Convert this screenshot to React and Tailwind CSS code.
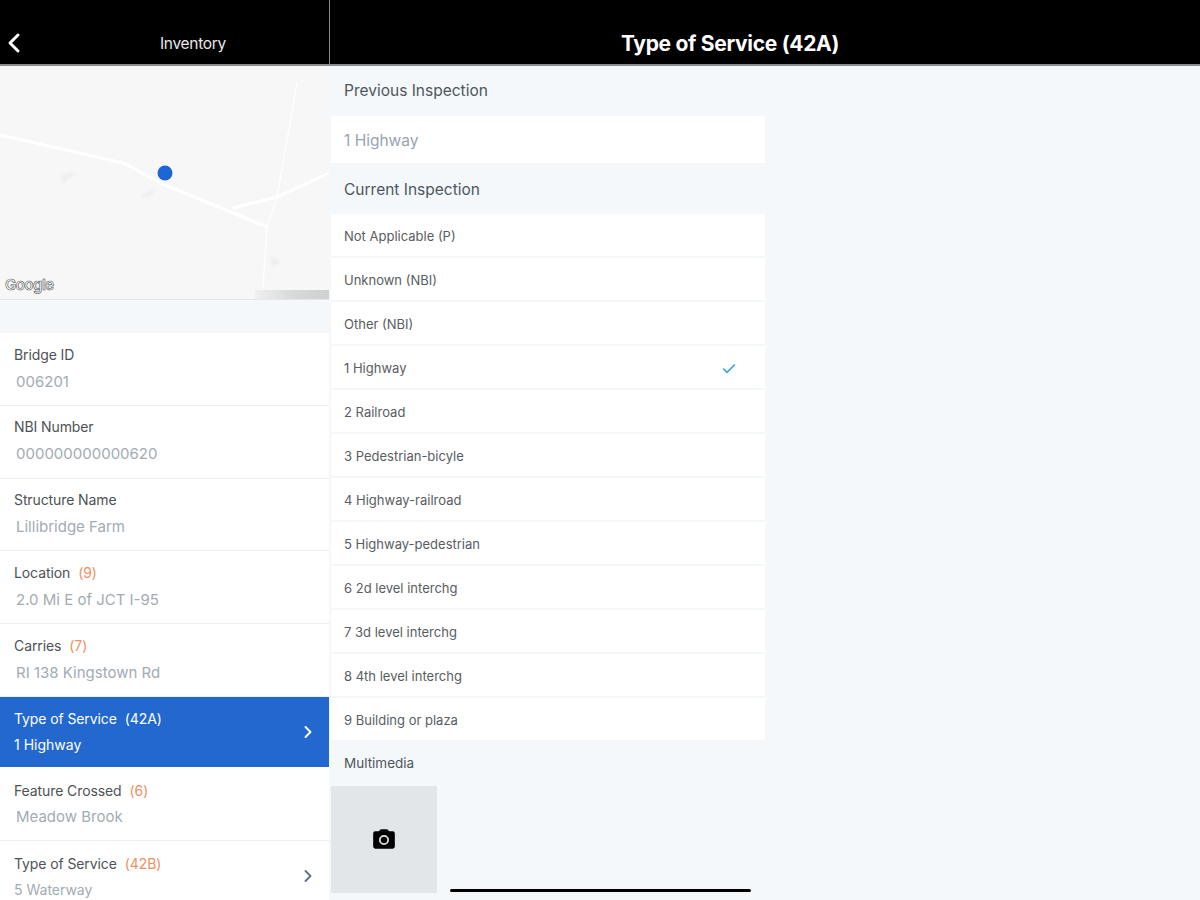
import { ChevronLeft, ChevronRight, Check } from 'lucide-react'

const inventory = [
  { label: 'Bridge ID', value: '006201', box: 'h-[72.8px] pt-[11.5px]', gap: 'mt-[8px]' },
  { label: 'NBI Number', value: '000000000000620', box: 'h-[72.8px] pt-[11.5px]', gap: 'mt-[8px]' },
  { label: 'Structure Name', value: 'Lillibridge Farm', box: 'h-[72.8px] pt-[11.5px]', gap: 'mt-[8px]' },
  { label: 'Location', code: '(9)', value: '2.0 Mi E of JCT I-95', box: 'h-[72.8px] pt-[11.5px]', gap: 'mt-[8px]' },
  { label: 'Carries', code: '(7)', value: 'RI 138 Kingstown Rd', box: 'h-[72.8px] pt-[11.5px]', gap: 'mt-[8px]' },
  { label: 'Type of Service', code: '(42A)', value: '1 Highway', active: true, arrow: true, box: 'h-[70px] pt-[12px]', gap: 'mt-[7px]' },
  { label: 'Feature Crossed', code: '(6)', value: 'Meadow Brook', box: 'h-[74px] pt-[14px]', gap: 'mt-[7px]' },
  { label: 'Type of Service', code: '(42B)', value: '5 Waterway', arrow: true, small: true, box: 'h-[73px] pt-[13px]', gap: 'mt-[7px]' },
]

const options = [
  'Not Applicable (P)',
  'Unknown (NBI)',
  'Other (NBI)',
  '1 Highway',
  '2 Railroad',
  '3 Pedestrian-bicyle',
  '4 Highway-railroad',
  '5 Highway-pedestrian',
  '6 2d level interchg',
  '7 3d level interchg',
  '8 4th level interchg',
  '9 Building or plaza',
]

function MapDrawing() {
  return (
    <svg viewBox="0 0 329 233" className="absolute inset-0 w-full h-full">
      <g fill="none" stroke="#ffffff" strokeLinecap="round" className="blur-[0.7px]">
        <path d="M0 69 L123 97 L165 119 L267 161" strokeWidth="3" />
        <path d="M233 142 L277 131 L329 107" strokeWidth="3" />
        <path d="M297 17 L277 131 L267 161 L263 221" strokeWidth="1.5" opacity="0.8" />
      </g>
      <g className="blur-[1px]">
        <path d="M60 112 Q66 105 78 108 L68 112 L64 118 Z" fill="#eeeeee" />
        <path d="M140 130 L158 122 L150 130 L142 132 Z" fill="#eeeeee" />
        <path d="M271 190 L281 196 L272 201 Z" fill="#eeeeee" />
      </g>
      <circle cx="165" cy="107" r="7.5" fill="#1c66d6" />
    </svg>
  )
}

function InventoryRow({ item }) {
  return (
    <div className={`relative shrink-0 pl-3.5 ${item.box} ${item.active ? 'bg-[#2268cf] text-white' : 'bg-white border-b border-[#ebedef]'}`}>
      <div className={`text-[14px] leading-[19px] tracking-[-0.1px] ${item.active ? 'text-white' : 'text-[#4d5257]'}`}>
        {item.label}
        {item.code && (
          <span className={`ml-2 ${item.active ? 'text-white' : 'text-[#f0905f]'}`}>{item.code}</span>
        )}
      </div>
      {item.active || item.small ? (
        <div className={`${item.gap} text-[14px] leading-[19px] ${item.active ? 'text-white' : 'text-[#a3abb3]'}`}>
          {item.value}
        </div>
      ) : (
        <div className={`${item.gap} ml-0.5 text-[15px] leading-[19px] text-[#a3abb3]`}>{item.value}</div>
      )}
      {item.arrow && (
        <ChevronRight
          size={20}
          strokeWidth={2.25}
          className={`absolute right-[11px] top-[25px] ${item.active ? 'text-white' : 'text-[#5f7387]'}`}
        />
      )}
    </div>
  )
}

function SectionLabel({ children, className }) {
  return (
    <div className={`flex items-center pl-[13px] text-[#50565b] ${className}`}>
      {children}
    </div>
  )
}

export default function App() {
  return (
    <div className="w-[1200px] h-[900px] overflow-hidden flex flex-col bg-[#f4f8fb] font-['Inter','Liberation_Sans',sans-serif]">
      {/* barra superior */}
      <div className="h-[66px] shrink-0 flex bg-black border-b-2 border-[#8a8c8e]">
        <div className="relative w-[330px] shrink-0 border-r border-[#8a8c8e]">
          <ChevronLeft size={32} strokeWidth={2.25} className="absolute left-[-2px] top-[27px] text-white" />
          <div className="absolute left-0 right-0 top-[34px] pl-[57px] text-center text-[15.5px] leading-5 tracking-[-0.3px] text-[#e8e8e8]">
            Inventory
          </div>
        </div>
        <div className="flex-1 pt-[32px] pr-[70px] text-center text-[21px] leading-6 font-bold tracking-[-0.3px] text-white">
          Type of Service (42A)
        </div>
      </div>

      <div className="flex-1 flex min-h-0">
        {/* columna izquierda */}
        <div className="w-[329px] shrink-0 mr-[2px] flex flex-col overflow-hidden">
          <div className="relative h-[234px] shrink-0 bg-[#f7f7f7] border-b border-[#e4e6e7]">
            <MapDrawing />
            <div className="absolute left-[5px] bottom-[6px] text-[15px] leading-4 font-semibold tracking-[-0.5px] text-[#f4f4f4] [-webkit-text-stroke:0.6px_#555]">
              Google
            </div>
            <div className="absolute right-0 bottom-0 w-[74px] h-[9px] bg-gradient-to-r from-[#f0f0f0] via-[#d8dada] to-[#cfd1d1]" />
          </div>
          <div className="h-[33px] shrink-0 bg-[#f4f8fb]" />
          {inventory.map((item) => (
            <InventoryRow key={item.label + item.value} item={item} />
          ))}
        </div>

        {/* columna central */}
        <div className="w-[434px] shrink-0 flex flex-col">
          <SectionLabel className="h-[50px] text-[15.5px]">Previous Inspection</SectionLabel>
          <div className="h-[47px] shrink-0 flex items-center pl-[13px] pt-[2px] bg-white text-[15.5px] text-[#97a4b2]">
            1 Highway
          </div>
          <SectionLabel className="h-[51px] pt-[2px] text-[15.5px]">Current Inspection</SectionLabel>
          {options.map((option) => (
            <div
              key={option}
              className="h-[44px] shrink-0 flex items-center justify-between pl-[13px] pr-[28px] pt-[3px] bg-white border-b-2 border-[#f4f6f8] text-[13px] text-[#585d62]"
            >
              {option}
              {option === '1 Highway' && <Check size={16} strokeWidth={2.5} className="text-[#3aa6dc]" />}
            </div>
          ))}
          <SectionLabel className="h-[44px] pb-[2px] text-[13.5px]">Multimedia</SectionLabel>
          <div className="w-[106px] h-[107px] shrink-0 flex items-center justify-center bg-[#e3e6e8]">
            <svg viewBox="0 0 24 24" className="w-[26px] h-[26px] text-black" fill="currentColor">
              <path d="M9 2 7.17 4H4a2 2 0 0 0-2 2v12a2 2 0 0 0 2 2h16a2 2 0 0 0 2-2V6a2 2 0 0 0-2-2h-3.17L15 2H9Zm3 14.6a4.6 4.6 0 1 1 0-9.2 4.6 4.6 0 0 1 0 9.2Z" />
              <circle cx="12" cy="12" r="3" />
            </svg>
          </div>
        </div>
      </div>

      {/* indicador inferior */}
      <div className="fixed left-[450px] top-[889px] w-[301px] h-[3px] rounded-full bg-black" />
    </div>
  )
}
